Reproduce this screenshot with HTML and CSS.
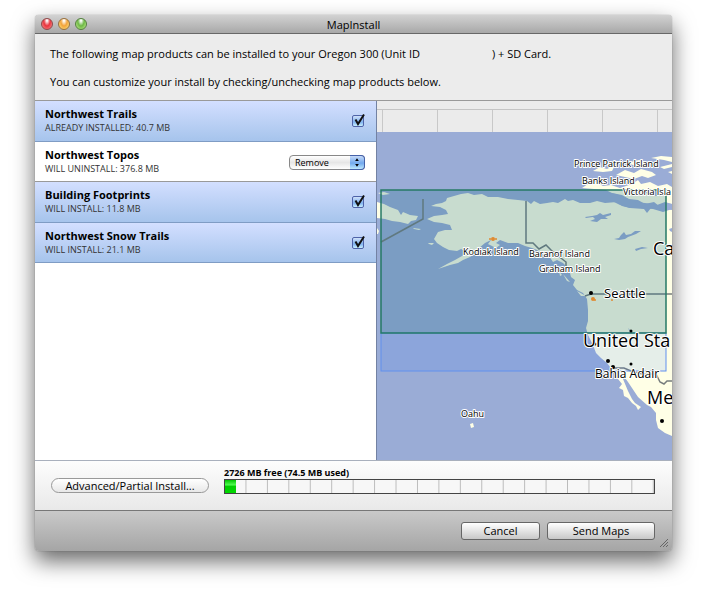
FILE: index.html
```html
<!DOCTYPE html>
<html lang="en">
<head>
    <meta charset="UTF-8">
    <meta name="viewport" content="width=device-width, initial-scale=1.0">
    <title>MapInstall</title>
    <link rel="stylesheet" href="styles.css">
</head>
<body>
    <div class="window">
        <div class="titlebar">
            <div class="lights">
                <button class="light red" aria-label="Close"></button>
                <button class="light yellow" aria-label="Minimize"></button>
                <button class="light green" aria-label="Zoom"></button>
            </div>
            <h1>MapInstall</h1>
        </div>

        <div class="intro">
            <p>The following map products can be installed to your Oregon 300 (Unit ID<span class="unit-id"></span>) + SD Card.</p>
            <p>You can customize your install by checking/unchecking map products below.</p>
        </div>

        <div class="content">
            <ul class="products">
                <li class="product selected">
                    <label for="trails"><span class="name">Northwest Trails</span><span class="status">ALREADY INSTALLED: 40.7 MB</span></label>
                    <span class="check">
                        <input type="checkbox" id="trails" checked>
                        <svg viewBox="0 0 14 15"><path d="M3.5 6.5 L6 11 L12 1.5"/></svg>
                    </span>
                </li>
                <li class="product">
                    <label for="topos"><span class="name">Northwest Topos</span><span class="status">WILL UNINSTALL: 376.8 MB</span></label>
                    <span class="popup">
                        <select id="topos">
                            <option>Remove</option>
                            <option>Keep</option>
                        </select>
                        <svg viewBox="0 0 15 14"><path d="M5.5 5.5 L7.5 2.5 L9.5 5.5Z M5.5 8.5 L7.5 11.5 L9.5 8.5Z"/></svg>
                    </span>
                </li>
                <li class="product selected">
                    <label for="footprints"><span class="name">Building Footprints</span><span class="status">WILL INSTALL: 11.8 MB</span></label>
                    <span class="check">
                        <input type="checkbox" id="footprints" checked>
                        <svg viewBox="0 0 14 15"><path d="M3.5 6.5 L6 11 L12 1.5"/></svg>
                    </span>
                </li>
                <li class="product selected">
                    <label for="snow"><span class="name">Northwest Snow Trails</span><span class="status">WILL INSTALL: 21.1 MB</span></label>
                    <span class="check">
                        <input type="checkbox" id="snow" checked>
                        <svg viewBox="0 0 14 15"><path d="M3.5 6.5 L6 11 L12 1.5"/></svg>
                    </span>
                </li>
            </ul>

            <div class="map-panel">
                <div class="ruler"></div>
                <svg class="map" viewBox="377 132 295 329" preserveAspectRatio="xMinYMin slice">
                    <!-- land -->
                    <g class="land">
                        <path d="M431 206 L436 204 L442 203 L446 201 L447 198 L454 196 L461 194 L468 193 L474 195 L482 194 L488 197 L498 197 L508 199 L518 200 L527 201 L531 204 L534 201 L540 204 L547 203 L553 202 L558 203 L565 199 L568 201 L573 200 L580 203 L590 203 L597 201 L605 203 L617 202 L622 206 L630 208 L640 208 L653 209 L663 212 L672 209 V436 L665 433 L658 428 L656 420 L656 413 L651 407 L647 405 L638 397 L632 388 L628 382 L623 375 L620 371 L623 379 L628 391 L632 399 L635 403 L641 407 L638 410 L636 406 L632 403 L628 398 L624 396 L623 390 L619 388 L622 384 L618 379 L613 371 L607 363 L601 358 L596 353 L593 345 L588 335 L586 328 L588 321 L588 310 L587 299 L583 293 L577 290 L573 285 L575 280 L571 277 L569 269 L563 263 L557 260 L553 262 L549 256 L543 254 L537 250 L532 248 L525 246 L518 243 L508 243 L500 240 L496 243 L500 245 L496 248 L488 244 L491 240 L485 243 L479 248 L476 253 L470 257 L463 260 L458 263 L450 265 L438 269 L447 264 L455 260 L462 256 L467 252 L461 249 L457 251 L449 250 L443 247 L437 243 L434 239 L438 232 L445 230 L452 230 L450 225 L442 223 L434 222 L427 219 L434 216 L442 215 L448 214 L446 210 L440 207Z"/>
                        <path d="M377 202 L384 204 L390 207 L398 210 L401 215 L403 212 L410 215 L418 216 L416 220 L411 221 L408 224 L400 222 L392 221 L385 219 L377 218Z"/>
                        <path d="M378 193 L384 192 L390 194 L383 195Z M413 228 L421 229 L419 230 L414 229Z M428 243 L434 243 L432 245 L429 244Z M377 228 L379 231 L378 234 L377 234Z"/>
                        <path d="M582 188 L588 184 L591 180 L596 182 L603 186 L611 185 L620 188 L632 184 L638 180 L641 184 L650 182 L658 186 L667 184 L672 187 V204 L664 203 L659 206 L654 202 L645 204 L638 200 L629 199 L622 195 L612 193 L606 190Z"/>
                        <path d="M593 171 L600 167 L607 169 L615 165 L612 171 L603 172Z M616 175 L625 170 L634 173 L641 169 L652 172 L656 175 L648 178 L642 176 L634 179 L625 177Z M627 163 L639 160 L651 163 L645 166 L633 165Z M651 158 L661 156 L672 157 V162 L664 160Z M660 167 L672 164 V167 L664 169Z M668 172 L672 171 V174Z"/>
                        <path d="M470 424 L473 423 L474 427 L471 428Z M559 271 L562 275 L560 276Z M563 274 L570 282 L567 281Z M577 291 L586 296 L581 296Z"/>
                    </g>
                    <!-- lakes and straits -->
                    <g class="water">
                        <path d="M585 217 L592 216 L597 215 L600 213 L603 215 L611 213 L611 215 L605 217 L608 219 L601 219 L597 222 L590 221 L595 219 L593 217 L586 218Z M614 239 L619 238 L621 235 L624 232 L626 235 L631 234 L635 231 L641 231 L636 234 L628 237 L625 239 L619 240Z M635 249 L642 247 L648 248 L641 249 L636 251Z"/>
                        <path d="M604 192 L616 194 L624 197 L635 202 L645 203 L657 205 L665 202 L672 204 V210 L664 209 L651 208 L647 213 L644 209 L630 208 L620 205 L610 200Z"/>
                        <path d="M640 190 L650 192 L656 191 L664 195 L656 196 L648 194Z M669 229 L672 228 V232 L670 231Z M628 328 L631 331 L630 332Z"/>
                    </g>
                    <!-- borders -->
                    <path class="border" d="M423 199 V219 L381 242"/>
                    <path class="border" d="M526 201 V243 H533 L539 249 L546 245 L551 250 L557 255 L566 262 V266"/>
                    <path class="border" d="M585 296 L591 294 H672 M613 368 H624 L631 371 L642 374 H656 L660 382 L664 384 L667 381 H672"/>
                    <!-- coverage areas -->
                    <rect class="area-blue" x="381" y="333" width="285" height="38"/>
                    <rect class="area-green" x="381" y="190" width="285" height="143"/>
                    <g class="city">
                        <circle cx="591" cy="293" r="2"/><circle cx="631" cy="331" r="1.5"/><circle cx="595" cy="344" r="1.5"/><circle cx="608" cy="361" r="2"/><circle cx="613" cy="367" r="2"/><circle cx="631" cy="364" r="1.5"/><circle cx="662" cy="421" r="2"/>
                    </g>
                    <g class="trail">
                        <circle cx="493" cy="239" r="2"/><circle cx="496" cy="239" r="1"/><circle cx="490" cy="239" r="1"/><circle cx="593" cy="299" r="2"/><circle cx="595" cy="300" r="1"/><circle cx="612" cy="300" r="1"/>
                    </g>
                    <g class="place small">
                        <text x="574" y="167">Prince Patrick Island</text>
                        <text x="582" y="184">Banks Island</text>
                        <text x="623" y="195">Victoria Isla</text>
                        <text x="463" y="255">Kodiak Island</text>
                        <text x="529" y="257">Baranof Island</text>
                        <text x="539" y="272">Graham Island</text>
                        <text x="461" y="417">Oahu</text>
                    </g>
                    <g class="place medium">
                        <text x="604" y="298">Seattle</text>
                    </g>
                    <g class="place regional">
                        <text x="595" y="378">Bahia Adair</text>
                    </g>
                    <g class="place large">
                        <text x="653" y="255">Ca</text>
                        <text x="583" y="347">United Sta</text>
                        <text x="647" y="404">Me</text>
                    </g>
                </svg>
            </div>
        </div>

        <div class="storage">
            <button class="advanced">Advanced/Partial Install...</button>
            <div class="capacity">
                <div class="capacity-label" id="capacity-label">2726 MB free (74.5 MB used)</div>
                <div class="meter" role="meter" aria-labelledby="capacity-label" aria-valuemin="0" aria-valuemax="2800" aria-valuenow="74">
                    <div class="meter-used" style="width: 2.66%"></div>
                </div>
            </div>
        </div>

        <div class="actions">
            <button class="cancel">Cancel</button>
            <button class="send">Send Maps</button>
            <svg class="grip" viewBox="0 0 10 10"><path d="M1 9 L9 1 M4 9 L9 4 M7 9 L9 7"/></svg>
        </div>
    </div>
</body>
</html>
```
FILE: styles.css
```css
* {
    box-sizing: border-box;
}
body {
    display: flex;
    min-height: 100vh;
    margin: 0;
    padding: 15px 48px 48px 35px;
    overflow: hidden;
    background-color: #fff;
    font-family: "Open Sans", "Noto Sans", sans-serif;
    font-size: 11px;
    color: #000;
}
button, select {
    font-family: inherit;
    font-size: 11px;
    color: #000;
}
.window {
    display: flex;
    flex-direction: column;
    flex: 1;
    min-width: 0;
    border-radius: 4px;
    background-color: #ececec;
    box-shadow: 0 0 1px rgba(0, 0, 0, 0.5), 0 10px 22px rgba(0, 0, 0, 0.6);
}

/* title bar */
.titlebar {
    display: grid;
    grid-template-columns: 1fr auto 1fr;
    align-items: center;
    height: 19px;
    padding: 0 6px;
    border-bottom: 1px solid #686868;
    border-radius: 4px 4px 0 0;
    background: linear-gradient(#d2d2d2, #a8a8a8);
}
.titlebar h1 {
    margin: 0;
    font-size: 11px;
    font-weight: normal;
}
.lights {
    display: flex;
    gap: 5px;
}
.light {
    width: 12px;
    height: 12px;
    padding: 0;
    border: 1px solid #777;
    border-radius: 50%;
}
.red {
    border-color: #8d4a4a;
    background: radial-gradient(ellipse at 50% 15%, #fff 5%, #e8343c 45%, #f99 100%);
}
.yellow {
    border-color: #96703f;
    background: radial-gradient(ellipse at 50% 15%, #fff 5%, #f2a33a 45%, #ffee8c 100%);
}
.green {
    border-color: #54803f;
    background: radial-gradient(ellipse at 50% 15%, #fff 5%, #6db844 45%, #d0f59a 100%);
}

/* intro */
.intro {
    padding: 12px 15px 10px;
    border-bottom: 1px solid #999;
}
.intro p {
    margin: 0 0 12px;
    line-height: 16px;
}
.intro p:last-child {
    margin-bottom: 0;
}
.unit-id {
    display: inline-block;
    width: 72px;
}

/* product list and map */
.content {
    display: grid;
    grid-template-columns: minmax(0, 342fr) minmax(0, 295fr);
    flex: 1;
    border-bottom: 1px solid #a9b0bd;
}
.products {
    margin: 0;
    padding: 0;
    border-right: 1px solid #7382a3;
    list-style: none;
    background-color: #fff;
}
.product {
    display: flex;
    align-items: center;
    justify-content: space-between;
    height: 41px;
    padding: 0 11px 2px 10px;
    border-bottom: 1px solid #999;
}
.product:nth-child(even) {
    height: 40px;
}
.selected {
    border-bottom-color: #7f9cc4;
    background: linear-gradient(#d3dfff, #a6c4ec);
}
.name, .status {
    display: block;
}
.name {
    line-height: 15px;
    font-weight: bold;
}
.status {
    line-height: 13px;
    font-size: 9px;
    color: #333;
}
.check {
    position: relative;
    width: 13px;
    height: 14px;
}
.check input {
    display: block;
    width: 12px;
    height: 12px;
    margin: 2px 0 0;
    appearance: none;
    border: 1px solid #4f63a8;
    border-radius: 2px;
    background: linear-gradient(#cfe0fa, #7fb2f0 60%, #c8f0ff);
}
.check svg {
    position: absolute;
    top: 0;
    left: 0;
    width: 14px;
    height: 15px;
    fill: none;
    stroke: #111;
    stroke-width: 2;
    pointer-events: none;
}
.check input:not(:checked) + svg {
    display: none;
}
.popup {
    position: relative;
    width: 76px;
    height: 15px;
}
.product .popup {
    margin-top: 4px;
}
.popup select {
    display: block;
    width: 100%;
    height: 15px;
    padding: 0 0 0 5px;
    appearance: none;
    border: 1px solid #888;
    border-radius: 4px;
    background: linear-gradient(#fff, #e6e6e6 50%, #fff);
    font-size: 9px;
    line-height: 13px;
}
.popup svg {
    position: absolute;
    top: 0;
    right: 0;
    width: 15px;
    height: 15px;
    border: 1px solid #4561a8;
    border-left: none;
    border-radius: 0 4px 4px 0;
    background: linear-gradient(#c6daf8, #72a9ee 55%, #bfeaff);
    pointer-events: none;
}
.map-panel {
    display: flex;
    flex-direction: column;
    min-width: 0;
}
.ruler {
    height: 31px;
    border-top: 8px solid #ebebeb;
    background:
        linear-gradient(#c4c4c4, #c4c4c4) 0 0 / 100% 1px no-repeat,
        repeating-linear-gradient(to right, #c8c8c8 0, #c8c8c8 1px, #ebebeb 1px, #ebebeb 55px) 5px 0;
}
.map {
    flex: 1 1 0;
    width: 100%;
    min-height: 0;
    background-color: #9aacd6;
}
.land {
    fill: #ffffe6;
}
.water {
    fill: #9aacd6;
}
.border {
    fill: none;
    stroke: #777d7d;
    stroke-width: 1.5;
}
.area-blue {
    fill: rgba(40, 115, 255, 0.12);
    stroke: #6090ee;
}
.area-green {
    fill: rgba(26, 109, 134, 0.24);
    stroke: #267a66;
    stroke-width: 1.5;
}
.city {
    fill: #000;
}
.trail {
    fill: #e08a30;
}
.place {
    fill: #000;
    stroke: #fff;
    stroke-width: 2;
    stroke-linejoin: round;
    paint-order: stroke;
}
.small {
    font-size: 9px;
}
.medium {
    font-size: 13px;
}
.regional {
    font-size: 12px;
}
.large {
    font-size: 18px;
}

/* storage */
.storage {
    display: flex;
    align-items: center;
    gap: 15px;
    height: 50px;
    padding: 0 17px 0 16px;
    border-bottom: 1px solid #777;
    background: linear-gradient(#fdfdfd, #e9e9e9);
}
.advanced {
    width: 158px;
    height: 15px;
    padding: 0;
    border: 1px solid #999;
    border-radius: 8px;
    background: linear-gradient(#fff, #e8e8e8);
    line-height: 13px;
}
.capacity {
    flex: 1;
    margin-bottom: 10px;
}
.capacity-label {
    height: 12px;
    line-height: 12px;
    font-size: 9px;
    font-weight: bold;
}
.meter {
    height: 15px;
    border: 1px solid #444;
    background: linear-gradient(to right, transparent calc(100% - 1px), #bbb 0) 0 0 / 5% 100% #f7f7f7;
}
.meter-used {
    height: 100%;
    background: linear-gradient(#00c400, #5f5 40%, #0c0 45%, #00d800);
}

/* actions */
.actions {
    position: relative;
    display: flex;
    align-items: center;
    justify-content: flex-end;
    gap: 7px;
    height: 40px;
    padding: 0 17px 1px;
    border-radius: 0 0 4px 4px;
    background: linear-gradient(#c9c9c9, #a5a5a5);
}
.actions button {
    height: 18px;
    padding: 0;
    border: 1px solid #666;
    border-radius: 3px;
    background: linear-gradient(#fff, #c8c8c8);
    line-height: 16px;
}
.cancel {
    width: 79px;
}
.send {
    width: 108px;
}
.grip {
    position: absolute;
    right: 3px;
    bottom: 3px;
    width: 10px;
    height: 10px;
    fill: none;
    stroke: #666;
}
```
